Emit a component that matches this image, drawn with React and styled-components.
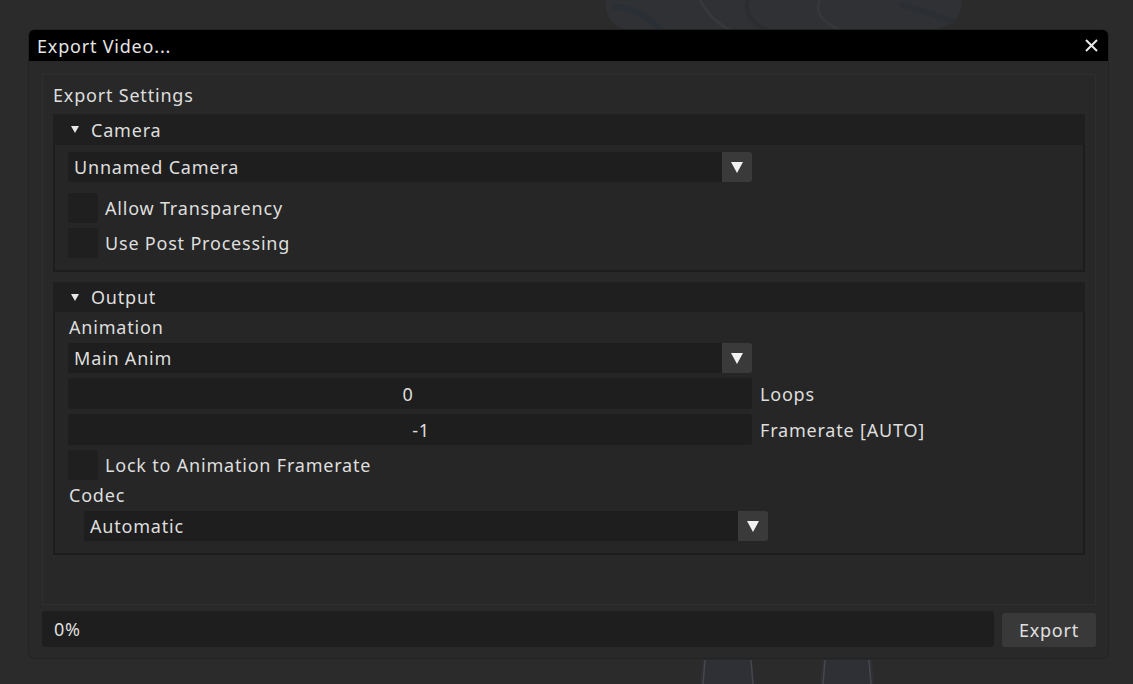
import React from 'react';
import styled, { createGlobalStyle } from 'styled-components';

const GlobalStyle = createGlobalStyle`
  html, body {
    margin: 0;
    padding: 0;
    background: #2b2b2b;
  }
  body {
    font-family: "Noto Sans", "Open Sans", sans-serif;
    font-size: 18px;
    letter-spacing: 0.8px;
    color: #dedede;
  }
`;

const Scene = styled.div`
  position: relative;
  width: 1133px;
  height: 684px;
  overflow: hidden;
  background: #2b2b2b;
`;

const Backdrop = styled.svg`
  position: absolute;
  left: 0;
  top: 0;
  z-index: 0;
`;

const Stage = styled.div`
  position: relative;
  z-index: 1;
  padding: 30px 0 0 29px;
`;

const Window = styled.div`
  width: 1079px;
  height: 628px;
  display: flex;
  flex-direction: column;
  background: #292929;
  border-radius: 5px;
  box-shadow: 0 0 0 1px #232323;
  overflow: hidden;
`;

const TitleBar = styled.div`
  height: 31px;
  flex: none;
  display: flex;
  align-items: center;
  justify-content: space-between;
  padding: 0 10px 0 8px;
  background: #000;
  color: #e4e4e4;
  border-radius: 5px 5px 0 0;
`;

const Body = styled.div`
  flex: 1;
  display: flex;
  flex-direction: column;
  gap: 6px;
  padding: 13px 12px 11px 13px;
`;

const Frame = styled.div`
  height: 531px;
  box-sizing: border-box;
  border: 1px solid #2f2f2f;
  background: #282828;
  padding: 9px 10px;
  display: flex;
  flex-direction: column;
`;

const FrameTitle = styled.div`
  height: 22px;
  line-height: 22px;
  margin-bottom: 8px;
`;

const Section = styled.section`
  display: flex;
  flex-direction: column;
  margin-bottom: ${({ $gap }) => $gap || 0}px;
`;

const SectionHeader = styled.div`
  height: ${({ $h }) => $h}px;
  display: flex;
  align-items: center;
  gap: 12px;
  padding-left: 18px;
  background: #1f1f1f;
`;

const SectionBody = styled.div`
  display: flex;
  flex-direction: column;
  gap: 5px;
  padding: ${({ $pad }) => $pad};
  background: #262626;
  border: 2px solid #1d1d1d;
  border-top: none;
`;

const Label = styled.div`
  height: 21px;
  line-height: 21px;
  padding-left: 1px;
`;

const ComboWrap = styled.div`
  display: flex;
  width: 684px;
  height: 30px;
  margin-left: ${({ $indent }) => $indent || 0}px;
  margin-bottom: ${({ $after }) => $after || 0}px;
`;

const ComboField = styled.div`
  flex: 1;
  display: flex;
  align-items: center;
  padding-left: 6px;
  background: #1e1e1e;
  border-radius: 3px 0 0 3px;
`;

const ComboButton = styled.div`
  width: 30px;
  display: flex;
  align-items: center;
  justify-content: center;
  background: #3a3a3a;
  border-radius: 0 3px 3px 0;
`;

const FieldRow = styled.div`
  display: flex;
  align-items: center;
  gap: 8px;
`;

const NumberField = styled.div`
  width: 684px;
  height: 31px;
  box-sizing: border-box;
  display: flex;
  align-items: center;
  justify-content: center;
  padding-left: ${({ $shift }) => Math.max($shift, 0)}px;
  padding-right: ${({ $shift }) => Math.max(-$shift, 0)}px;
  background: #1e1e1e;
  border-radius: 3px;
`;

const CheckRow = styled.div`
  display: flex;
  align-items: center;
  gap: 7px;
  height: 30px;
`;

const Box = styled.div`
  width: 30px;
  height: 30px;
  background: #1f1f1f;
  border-radius: 3px;
`;

const Footer = styled.div`
  display: flex;
  gap: 8px;
  height: 36px;
`;

const Progress = styled.div`
  flex: 1;
  display: flex;
  align-items: center;
  padding-left: 12px;
  background: #1e1e1e;
  border-radius: 3px;
`;

const ExportButton = styled.button`
  width: 94px;
  margin: 2px 0 0;
  border: none;
  border-radius: 3px;
  background: #393939;
  color: #e0e0e0;
  font: inherit;
  letter-spacing: inherit;
  padding: 0;
`;

const Arrow = () => (
  <svg width="12" height="11" viewBox="0 0 12 11">
    <polygon points="0,0 12,0 6,11" fill="#f2f2f2" />
  </svg>
);

const Caret = () => (
  <svg width="8" height="7" viewBox="0 0 8 7">
    <polygon points="0,0 8,0 4,7" fill="#e8e8e8" />
  </svg>
);

const CloseIcon = () => (
  <svg width="13" height="13" viewBox="0 0 13 13">
    <path d="M1 1 L12 12 M12 1 L1 12" stroke="#e8e8e8" strokeWidth="2" />
  </svg>
);

function Combo({ value, indent, after }) {
  return (
    <ComboWrap $indent={indent} $after={after}>
      <ComboField>{value}</ComboField>
      <ComboButton>
        <Arrow />
      </ComboButton>
    </ComboWrap>
  );
}

function Check({ label }) {
  return (
    <CheckRow>
      <Box />
      <span>{label}</span>
    </CheckRow>
  );
}

export default function App() {
  return (
    <>
      <GlobalStyle />
      <Scene>
        <Backdrop width="1133" height="684" viewBox="0 0 1133 684">
          <path d="M606 0 C604 14 612 28 630 30 L930 30 C952 28 962 16 962 0 Z" fill="#303134" />
          <path d="M612 6 C630 8 648 16 660 30" stroke="#2a2f35" strokeWidth="6" fill="none" />
          <path d="M700 0 C706 12 714 22 730 30" stroke="#37383c" strokeWidth="3" fill="none" />
          <path d="M748 0 C744 12 750 22 766 30" stroke="#2b2d31" strokeWidth="4" fill="none" />
          <path d="M820 0 C814 12 822 22 840 30" stroke="#36373b" strokeWidth="3" fill="none" />
          <path d="M900 4 C920 10 940 16 955 22" stroke="#2b2e33" strokeWidth="5" fill="none" />
          <path d="M700 684 L702 660 L752 660 L754 684 Z" fill="#2f3035" />
          <path d="M820 684 L822 660 L872 660 L874 684 Z" fill="#2f3035" />
          <path d="M703 684 L705 660 M751 660 L753 684 M823 684 L825 660 M869 660 L871 684" stroke="#46474c" strokeWidth="1.5" />
        </Backdrop>
        <Stage>
          <Window>
            <TitleBar>
              <span>Export Video...</span>
              <CloseIcon />
            </TitleBar>
            <Body>
              <Frame>
                <FrameTitle>Export Settings</FrameTitle>
                <Section $gap={10}>
                  <SectionHeader $h={31}>
                    <Caret />
                    <span>Camera</span>
                  </SectionHeader>
                  <SectionBody $pad="7px 13px 12px 13px">
                    <Combo value="Unnamed Camera" after={6} />
                    <Check label="Allow Transparency" />
                    <Check label="Use Post Processing" />
                  </SectionBody>
                </Section>
                <Section>
                  <SectionHeader $h={30}>
                    <Caret />
                    <span>Output</span>
                  </SectionHeader>
                  <SectionBody $pad="5px 13px 12px 13px">
                    <Label>Animation</Label>
                    <Combo value="Main Anim" />
                    <FieldRow>
                      <NumberField $shift={-4}>0</NumberField>
                      <span>Loops</span>
                    </FieldRow>
                    <FieldRow>
                      <NumberField $shift={22}>-1</NumberField>
                      <span>Framerate [AUTO]</span>
                    </FieldRow>
                    <Check label="Lock to Animation Framerate" />
                    <Label>Codec</Label>
                    <Combo value="Automatic" indent={16} />
                  </SectionBody>
                </Section>
              </Frame>
              <Footer>
                <Progress>0%</Progress>
                <ExportButton>Export</ExportButton>
              </Footer>
            </Body>
          </Window>
        </Stage>
      </Scene>
    </>
  );
}
